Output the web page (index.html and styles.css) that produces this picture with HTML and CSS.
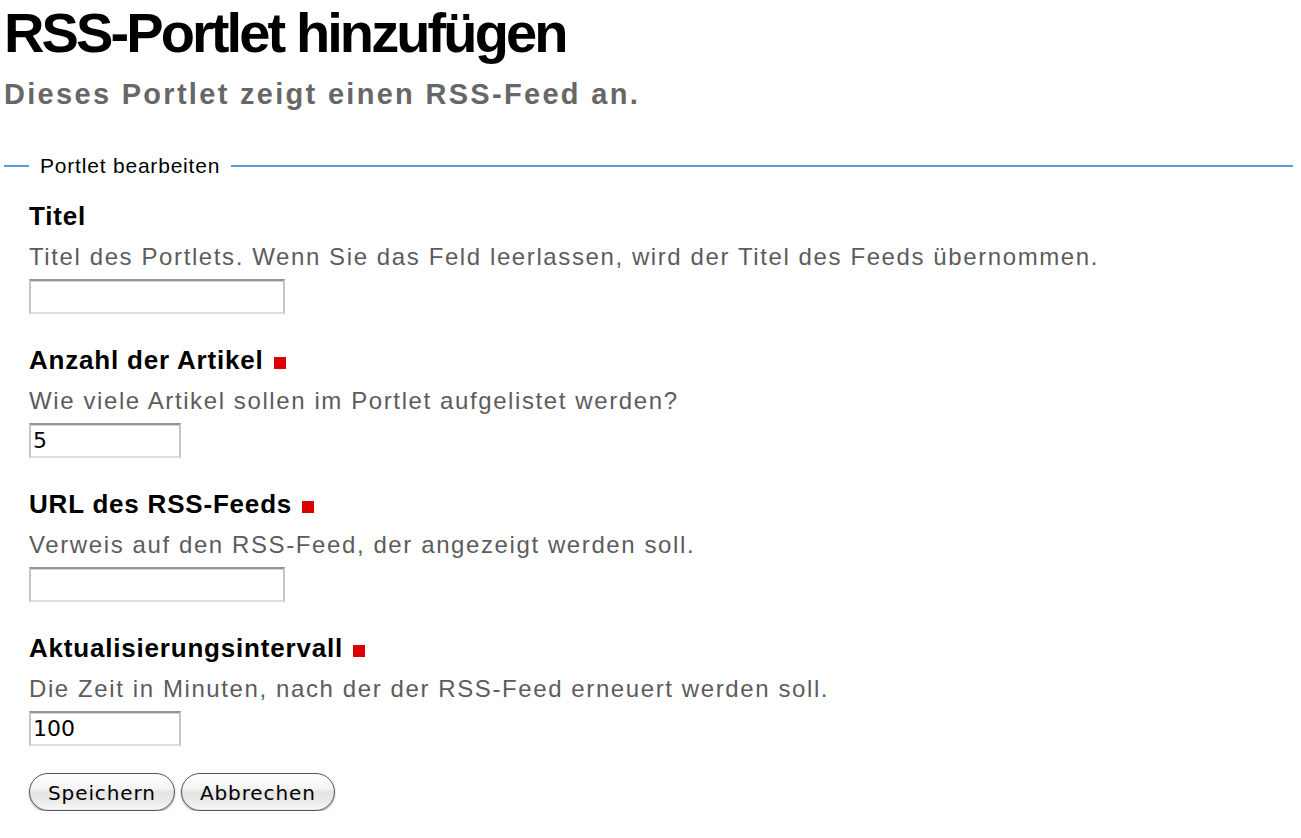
FILE: index.html
```html
<!DOCTYPE html>
<html lang="de">
<head>
<meta charset="utf-8">
<title>RSS-Portlet hinzufügen</title>
<link rel="stylesheet" href="styles.css">
</head>
<body>
<div class="page">
  <h1 class="doc-title">RSS-Portlet hinzufügen</h1>
  <p class="doc-description">Dieses Portlet zeigt einen RSS-Feed an.</p>
  <form class="edit-form">
    <fieldset class="edit-fieldset">
      <legend class="edit-legend">Portlet bearbeiten</legend>

      <div class="field">
        <label class="field-label">Titel</label>
        <div class="field-help">Titel des Portlets. Wenn Sie das Feld leerlassen, wird der Titel des Feeds übernommen.</div>
        <input class="text-input wide" type="text" value="">
      </div>

      <div class="field">
        <label class="field-label">Anzahl der Artikel<span class="required"></span></label>
        <div class="field-help">Wie viele Artikel sollen im Portlet aufgelistet werden?</div>
        <input class="text-input narrow" type="text" value="5">
      </div>

      <div class="field">
        <label class="field-label">URL des RSS-Feeds<span class="required"></span></label>
        <div class="field-help">Verweis auf den RSS-Feed, der angezeigt werden soll.</div>
        <input class="text-input wide" type="text" value="">
      </div>

      <div class="field last">
        <label class="field-label">Aktualisierungsintervall<span class="required"></span></label>
        <div class="field-help">Die Zeit in Minuten, nach der der RSS-Feed erneuert werden soll.</div>
        <input class="text-input narrow" type="text" value="100">
      </div>

      <div class="form-buttons">
        <button type="button" class="aqua-button">Speichern</button>
        <button type="button" class="aqua-button">Abbrechen</button>
      </div>
    </fieldset>
  </form>
</div>
</body>
</html>
```
FILE: styles.css
```css
html, body {
  margin: 0;
  padding: 0;
  background: #ffffff;
}

.page {
  padding: 3px 8px 0 4px;
  font-family: "Liberation Sans", Arial, sans-serif;
  color: #000;
}

.doc-title {
  margin: 0;
  font-family: "Liberation Sans", Arial, sans-serif;
  font-weight: bold;
  font-size: 56px;
  line-height: 60px;
  letter-spacing: -2.9px;
  color: #000;
}

.doc-description {
  margin: 15px 0 0 0;
  font-family: "Liberation Sans", Arial, sans-serif;
  font-weight: bold;
  font-size: 29px;
  line-height: 32px;
  letter-spacing: 2.3px;
  color: #676767;
}

.edit-form {
  margin: 0;
}

.edit-fieldset {
  margin: 44px 0 0 0;
  padding: 23px 0 0 25px;
  border: none;
  border-top: 2px solid #5e9cd8;
  min-width: 0;
}

.edit-legend {
  margin-left: 0;
  padding: 0 11px 0 11px;
  font-family: "Liberation Sans", Arial, sans-serif;
  font-size: 21px;
  line-height: 24px;
  letter-spacing: 0.8px;
  color: #000;
}

.field {
  display: flex;
  flex-direction: column;
  align-items: flex-start;
  margin-bottom: 31px;
}

.field.last {
  margin-bottom: 27px;
}

.field-label {
  display: block;
  font-family: "Liberation Sans", Arial, sans-serif;
  font-weight: bold;
  font-size: 26px;
  line-height: 30px;
  letter-spacing: 0.8px;
  color: #000;
}

.required {
  display: inline-block;
  width: 12px;
  height: 12px;
  margin-left: 10px;
  background: #dd0000;
  vertical-align: baseline;
}

.field-help {
  margin-top: 12px;
  font-family: "Liberation Sans", Arial, sans-serif;
  font-size: 24px;
  line-height: 28px;
  letter-spacing: 1.6px;
  color: #5c5c5c;
}

.text-input {
  box-sizing: border-box;
  margin: 8px 0 0 0;
  height: 35px;
  padding: 0 2px;
  border-style: solid;
  border-width: 2px;
  border-color: #959595 #c4c4c4 #dcdcdc #c4c4c4;
  box-shadow: inset 0 1px 0 #d4d4d4;
  background: #fff;
  font-family: "DejaVu Sans", "Liberation Sans", sans-serif;
  font-size: 22px;
  color: #000;
  outline: none;
}

.text-input.wide {
  width: 256px;
}

.text-input.narrow {
  width: 152px;
}

.form-buttons {
  display: flex;
  gap: 6px;
}

.aqua-button {
  box-sizing: border-box;
  height: 38px;
  padding: 2px 18px 0 18px;
  border: 1px solid #555555;
  border-radius: 19px;
  background: linear-gradient(to bottom, #ffffff 0%, #f4f4f4 40%, #e4e4e4 52%, #ececec 80%, #fbfbfb 100%);
  box-shadow: 0 1px 2px rgba(0, 0, 0, 0.35), inset 0 -1px 1px rgba(0, 0, 0, 0.08);
  font-family: "DejaVu Sans", "Liberation Sans", sans-serif;
  font-size: 20px;
  letter-spacing: 0.9px;
  color: #000;
  cursor: pointer;
}
```
